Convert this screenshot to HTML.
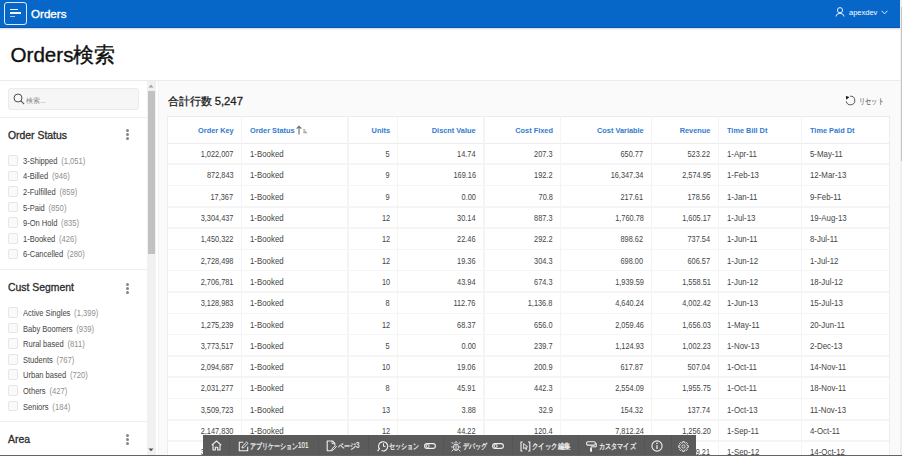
<!DOCTYPE html>
<html><head><meta charset="utf-8"><style>
*{box-sizing:border-box}
html,body{margin:0;padding:0}
body{width:902px;height:456px;overflow:hidden;position:relative;background:#fff;font-family:"Liberation Sans",sans-serif;color:#262626}
.a{position:absolute;white-space:nowrap}
.hdr{left:0;top:0;width:900px;height:27.8px;background:#0667c8;border-bottom:1px solid #0a58ad;box-shadow:0 1px 1.5px rgba(0,40,90,0.18)}
.vsb{left:900px;top:0;width:2px;height:456px;background:#f0f0f0}
.vsbt{left:901px;top:7px;width:1px;height:154px;background:#c4c4c4}
.ttl{left:10.5px;top:41.3px;font-size:20.6px;color:#111;-webkit-text-stroke:0.35px #111}
.bl{left:0;top:80px;width:900px;height:1px;background:#ebebeb}
.lp{left:0;top:81px;width:146.6px;height:375px;background:#fff}
.sbtr{left:146.6px;top:81px;width:9px;height:375px;background:#f1f1f1}
.sbth{left:147.5px;top:90.5px;width:7.5px;height:163.5px;background:#c1c1c1}
.cnt{left:155.6px;top:81px;width:744.4px;height:375px;background:#fafafa}
.tbl{left:167px;top:116px;width:722.5px;height:340px;background:#fff;border-left:1px solid #ececec;border-right:1px solid #ececec;border-top:1px solid #ececec}
.hl{height:1px;background:#ececec}
.vl{width:1px;background:#f0f0f0}
.th{font-size:8px;font-weight:700;color:#2f7bd0;transform:scaleX(0.92)}
.r{transform-origin:100% 0}.l{transform-origin:0 0}
.td.l{transform:scaleX(0.96)}
.td{font-size:8.2px;color:#454545;transform:scaleX(0.9)}
.ft{font-size:10.4px;font-weight:400;color:#2b2b2b;-webkit-text-stroke:0.3px #2b2b2b}
.cb{width:10.6px;height:10.8px;border:1px solid #e6e6e6;border-radius:2px;background:#fafafa}
.fl{font-size:8.4px;color:#444;transform:scaleX(0.9);transform-origin:0 0}
.fc{font-size:8.5px;color:#8f8f8f}
.sep{height:1px;background:#efefef}
.keb{width:3.2px;height:3.2px;border-radius:50%;background:#858585}
.tb{left:203.3px;top:435px;width:493.1px;height:21px;background:#5b5b5b}
.tbs{top:435px;width:1px;height:20px;background:#555}
.tbt{font-size:8px;color:#f4f4f4;font-weight:400;-webkit-text-stroke:0.25px #f4f4f4}
</style></head><body>

<div class="a hdr"></div>
<div class="a" style="left:4px;top:2px;width:23px;height:22.5px;border:1.5px solid #dfeaf7;border-radius:3px"></div>
<div class="a" style="left:10.3px;top:9.2px;width:7.8px;height:1.3px;background:#f4f8fc"></div>
<div class="a" style="left:10.3px;top:12.4px;width:10.8px;height:1.4px;background:#f4f8fc"></div>
<div class="a" style="left:10.3px;top:15.5px;width:5px;height:1.3px;background:#a9c8ec"></div>
<div class="a" style="left:31px;top:7.2px;font-size:11.6px;font-weight:400;color:#fff;-webkit-text-stroke:0.35px #fff">Orders</div>
<svg class="a" style="left:835px;top:7px" width="10" height="10" viewBox="0 0 10 10"><circle cx="5" cy="3.2" r="2.6" fill="none" stroke="#e8f0fb" stroke-width="1"/><path d="M0.8 9.5 Q1.5 6.3 5 6.3 Q8.5 6.3 9.2 9.5" fill="none" stroke="#e8f0fb" stroke-width="1"/></svg>
<div class="a" style="left:849px;top:8.2px;font-size:7.5px;color:#fff">apexdev</div>
<svg class="a" style="left:881px;top:10px" width="7" height="5" viewBox="0 0 7 5"><path d="M0.6 0.8 L3.5 3.8 L6.4 0.8" fill="none" stroke="#e8f0fb" stroke-width="1"/></svg>
<div class="a vsb"></div><div class="a vsbt"></div>
<div class="a ttl">Orders検索</div>
<div class="a bl"></div>
<div class="a lp"></div><div class="a sbtr"></div><div class="a sbth"></div><div class="a cnt"></div><div class="a" style="left:155.6px;top:81px;width:2.7px;height:375px;background:#fff"></div><div class="a" style="left:158.3px;top:81px;width:0.6px;height:375px;background:#f3f3f3"></div>
<svg class="a" style="left:148px;top:84px" width="6" height="4" viewBox="0 0 6 4"><path d="M0.5 3.5 L3 0.8 L5.5 3.5Z" fill="#a0a0a0"/></svg>
<svg class="a" style="left:148px;top:447.5px" width="6" height="4" viewBox="0 0 6 4"><path d="M0.5 0.5 L3 3.2 L5.5 0.5Z" fill="#505050"/></svg>
<div class="a" style="left:8px;top:88.2px;width:130.8px;height:21.5px;background:#f6f6f6;border:1px solid #ebebeb;border-radius:3px"></div>
<svg class="a" style="left:12.5px;top:93.3px" width="12" height="12" viewBox="0 0 12 12"><circle cx="5" cy="5" r="4" fill="none" stroke="#505050" stroke-width="1"/><path d="M7.9 7.9 L11.2 11.2" stroke="#505050" stroke-width="1.1"/></svg>
<div class="a" style="left:26.3px;top:95.8px;font-size:6.8px;color:#8f8f8f">検索...</div>
<div class="a sep" style="left:0;top:116.5px;width:146.6px"></div>
<div class="a ft" style="left:8px;top:129.8px">Order Status</div>
<div class="a keb" style="left:125.9px;top:128.60px"></div>
<div class="a keb" style="left:125.9px;top:132.70px"></div>
<div class="a keb" style="left:125.9px;top:136.80px"></div>
<div class="a cb" style="left:7.7px;top:154.90px"></div>
<div class="a fl" style="left:22.5px;top:155.80px">3-Shipped<span class="fc" style="margin-left:4.2px">(1,051)</span></div>
<div class="a cb" style="left:7.7px;top:170.50px"></div>
<div class="a fl" style="left:22.5px;top:171.40px">4-Billed<span class="fc" style="margin-left:4.2px">(946)</span></div>
<div class="a cb" style="left:7.7px;top:186.10px"></div>
<div class="a fl" style="left:22.5px;top:187.00px">2-Fulfilled<span class="fc" style="margin-left:4.2px">(859)</span></div>
<div class="a cb" style="left:7.7px;top:201.70px"></div>
<div class="a fl" style="left:22.5px;top:202.60px">5-Paid<span class="fc" style="margin-left:4.2px">(850)</span></div>
<div class="a cb" style="left:7.7px;top:217.30px"></div>
<div class="a fl" style="left:22.5px;top:218.20px">9-On Hold<span class="fc" style="margin-left:4.2px">(835)</span></div>
<div class="a cb" style="left:7.7px;top:232.90px"></div>
<div class="a fl" style="left:22.5px;top:233.80px">1-Booked<span class="fc" style="margin-left:4.2px">(426)</span></div>
<div class="a cb" style="left:7.7px;top:248.50px"></div>
<div class="a fl" style="left:22.5px;top:249.40px">6-Cancelled<span class="fc" style="margin-left:4.2px">(280)</span></div>
<div class="a sep" style="left:0;top:269px;width:146.6px"></div>
<div class="a ft" style="left:8px;top:281.8px">Cust Segment</div>
<div class="a keb" style="left:125.9px;top:282.50px"></div>
<div class="a keb" style="left:125.9px;top:286.60px"></div>
<div class="a keb" style="left:125.9px;top:290.70px"></div>
<div class="a cb" style="left:7.7px;top:307.00px"></div>
<div class="a fl" style="left:22.5px;top:307.90px">Active Singles<span class="fc" style="margin-left:4.2px">(1,399)</span></div>
<div class="a cb" style="left:7.7px;top:322.60px"></div>
<div class="a fl" style="left:22.5px;top:323.50px">Baby Boomers<span class="fc" style="margin-left:4.2px">(939)</span></div>
<div class="a cb" style="left:7.7px;top:338.20px"></div>
<div class="a fl" style="left:22.5px;top:339.10px">Rural based<span class="fc" style="margin-left:4.2px">(811)</span></div>
<div class="a cb" style="left:7.7px;top:353.80px"></div>
<div class="a fl" style="left:22.5px;top:354.70px">Students<span class="fc" style="margin-left:4.2px">(767)</span></div>
<div class="a cb" style="left:7.7px;top:369.40px"></div>
<div class="a fl" style="left:22.5px;top:370.30px">Urban based<span class="fc" style="margin-left:4.2px">(720)</span></div>
<div class="a cb" style="left:7.7px;top:385.00px"></div>
<div class="a fl" style="left:22.5px;top:385.90px">Others<span class="fc" style="margin-left:4.2px">(427)</span></div>
<div class="a cb" style="left:7.7px;top:400.60px"></div>
<div class="a fl" style="left:22.5px;top:401.50px">Seniors<span class="fc" style="margin-left:4.2px">(184)</span></div>
<div class="a sep" style="left:0;top:421px;width:146.6px"></div>
<div class="a ft" style="left:8px;top:433.6px">Area</div>
<div class="a keb" style="left:125.9px;top:434.00px"></div>
<div class="a keb" style="left:125.9px;top:438.10px"></div>
<div class="a keb" style="left:125.9px;top:442.20px"></div>
<div class="a" style="left:167.5px;top:93.8px;font-size:11.3px;font-weight:400;color:#1f1f1f;-webkit-text-stroke:0.3px #1f1f1f">合計行数 5,247</div>
<svg class="a" style="left:845px;top:95px" width="11" height="11" viewBox="0 0 11 11"><path d="M5.1 1.2 A4.3 4.3 0 1 1 1.27 6.25" fill="none" stroke="#5a5a5a" stroke-width="1"/><path d="M0.9 0.9 L4.4 1.9 L1.3 4.7Z" fill="#111"/></svg>
<div class="a" style="left:859px;top:96.2px;font-size:8px;color:#333;transform:scaleX(0.775);transform-origin:0 0">リセット</div>
<div class="a" style="left:167px;top:116px;width:723px;height:340px;background:#fff"></div>
<div class="a" style="left:167px;top:115.85px;width:723px;height:1.5px;background:#ebebeb"></div>
<div class="a" style="left:167px;top:142.75px;width:723px;height:1.5px;background:#ececec"></div>
<div class="a" style="left:167px;top:163.40px;width:723px;height:1.5px;background:#f5f5f5"></div>
<div class="a" style="left:167px;top:184.70px;width:723px;height:1.5px;background:#f5f5f5"></div>
<div class="a" style="left:167px;top:206.00px;width:723px;height:1.5px;background:#f5f5f5"></div>
<div class="a" style="left:167px;top:227.30px;width:723px;height:1.5px;background:#f5f5f5"></div>
<div class="a" style="left:167px;top:248.60px;width:723px;height:1.5px;background:#f5f5f5"></div>
<div class="a" style="left:167px;top:269.90px;width:723px;height:1.5px;background:#f5f5f5"></div>
<div class="a" style="left:167px;top:291.20px;width:723px;height:1.5px;background:#f5f5f5"></div>
<div class="a" style="left:167px;top:312.50px;width:723px;height:1.5px;background:#f5f5f5"></div>
<div class="a" style="left:167px;top:333.80px;width:723px;height:1.5px;background:#f5f5f5"></div>
<div class="a" style="left:167px;top:355.10px;width:723px;height:1.5px;background:#f5f5f5"></div>
<div class="a" style="left:167px;top:376.40px;width:723px;height:1.5px;background:#f5f5f5"></div>
<div class="a" style="left:167px;top:397.70px;width:723px;height:1.5px;background:#f5f5f5"></div>
<div class="a" style="left:167px;top:419.00px;width:723px;height:1.5px;background:#f5f5f5"></div>
<div class="a" style="left:167px;top:440.30px;width:723px;height:1.5px;background:#f5f5f5"></div>
<div class="a" style="left:166.75px;top:116px;width:1.5px;height:340px;background:#ededed"></div>
<div class="a" style="left:240.55px;top:116px;width:1.5px;height:340px;background:#f4f4f4"></div>
<div class="a" style="left:347.45px;top:116px;width:1.5px;height:340px;background:#f4f4f4"></div>
<div class="a" style="left:396.85px;top:116px;width:1.5px;height:340px;background:#f4f4f4"></div>
<div class="a" style="left:483.05px;top:116px;width:1.5px;height:340px;background:#f4f4f4"></div>
<div class="a" style="left:559.95px;top:116px;width:1.5px;height:340px;background:#f4f4f4"></div>
<div class="a" style="left:650.75px;top:116px;width:1.5px;height:340px;background:#f4f4f4"></div>
<div class="a" style="left:717.65px;top:116px;width:1.5px;height:340px;background:#f4f4f4"></div>
<div class="a" style="left:800.65px;top:116px;width:1.5px;height:340px;background:#f4f4f4"></div>
<div class="a" style="left:888.55px;top:116px;width:1.5px;height:340px;background:#ededed"></div>
<div class="a th r" style="right:668.7px;top:126.1px">Order Key</div>
<div class="a th l" style="left:249.6px;top:126.1px">Order Status</div>
<div class="a th r" style="right:512.4px;top:126.1px">Units</div>
<div class="a th r" style="right:426.2px;top:126.1px">Discnt Value</div>
<div class="a th r" style="right:349.3px;top:126.1px">Cost Fixed</div>
<div class="a th r" style="right:258.5px;top:126.1px">Cost Variable</div>
<div class="a th r" style="right:191.6px;top:126.1px">Revenue</div>
<div class="a th l" style="left:726.7px;top:126.1px">Time Bill Dt</div>
<div class="a th l" style="left:809.7px;top:126.1px">Time Paid Dt</div>
<svg class="a" style="left:295.5px;top:124.5px" width="12" height="10" viewBox="0 0 12 10"><path d="M3 9.5 V1.5 M0.7 3.7 L3 1.2 L5.3 3.7" fill="none" stroke="#6a6a6a" stroke-width="1.1"/><path d="M7.3 4.6 h1.6 M7.3 6.2 h2.8 M7.3 7.8 h3.8" stroke="#888" stroke-width="0.9"/></svg>
<div class="a td r" style="right:668.7px;top:150.15px">1,022,007</div>
<div class="a td l" style="left:249.6px;top:150.15px">1-Booked</div>
<div class="a td r" style="right:512.4px;top:150.15px">5</div>
<div class="a td r" style="right:426.2px;top:150.15px">14.74</div>
<div class="a td r" style="right:349.3px;top:150.15px">207.3</div>
<div class="a td r" style="right:258.5px;top:150.15px">650.77</div>
<div class="a td r" style="right:191.6px;top:150.15px">523.22</div>
<div class="a td l" style="left:726.7px;top:150.15px">1-Apr-11</div>
<div class="a td l" style="left:809.7px;top:150.15px">5-May-11</div>
<div class="a td r" style="right:668.7px;top:171.45px">872,843</div>
<div class="a td l" style="left:249.6px;top:171.45px">1-Booked</div>
<div class="a td r" style="right:512.4px;top:171.45px">9</div>
<div class="a td r" style="right:426.2px;top:171.45px">169.16</div>
<div class="a td r" style="right:349.3px;top:171.45px">192.2</div>
<div class="a td r" style="right:258.5px;top:171.45px">16,347.34</div>
<div class="a td r" style="right:191.6px;top:171.45px">2,574.95</div>
<div class="a td l" style="left:726.7px;top:171.45px">1-Feb-13</div>
<div class="a td l" style="left:809.7px;top:171.45px">12-Mar-13</div>
<div class="a td r" style="right:668.7px;top:192.75px">17,367</div>
<div class="a td l" style="left:249.6px;top:192.75px">1-Booked</div>
<div class="a td r" style="right:512.4px;top:192.75px">9</div>
<div class="a td r" style="right:426.2px;top:192.75px">0.00</div>
<div class="a td r" style="right:349.3px;top:192.75px">70.8</div>
<div class="a td r" style="right:258.5px;top:192.75px">217.61</div>
<div class="a td r" style="right:191.6px;top:192.75px">178.56</div>
<div class="a td l" style="left:726.7px;top:192.75px">1-Jan-11</div>
<div class="a td l" style="left:809.7px;top:192.75px">9-Feb-11</div>
<div class="a td r" style="right:668.7px;top:214.05px">3,304,437</div>
<div class="a td l" style="left:249.6px;top:214.05px">1-Booked</div>
<div class="a td r" style="right:512.4px;top:214.05px">12</div>
<div class="a td r" style="right:426.2px;top:214.05px">30.14</div>
<div class="a td r" style="right:349.3px;top:214.05px">887.3</div>
<div class="a td r" style="right:258.5px;top:214.05px">1,760.78</div>
<div class="a td r" style="right:191.6px;top:214.05px">1,605.17</div>
<div class="a td l" style="left:726.7px;top:214.05px">1-Jul-13</div>
<div class="a td l" style="left:809.7px;top:214.05px">19-Aug-13</div>
<div class="a td r" style="right:668.7px;top:235.35px">1,450,322</div>
<div class="a td l" style="left:249.6px;top:235.35px">1-Booked</div>
<div class="a td r" style="right:512.4px;top:235.35px">12</div>
<div class="a td r" style="right:426.2px;top:235.35px">22.46</div>
<div class="a td r" style="right:349.3px;top:235.35px">292.2</div>
<div class="a td r" style="right:258.5px;top:235.35px">898.62</div>
<div class="a td r" style="right:191.6px;top:235.35px">737.54</div>
<div class="a td l" style="left:726.7px;top:235.35px">1-Jun-11</div>
<div class="a td l" style="left:809.7px;top:235.35px">8-Jul-11</div>
<div class="a td r" style="right:668.7px;top:256.65px">2,728,498</div>
<div class="a td l" style="left:249.6px;top:256.65px">1-Booked</div>
<div class="a td r" style="right:512.4px;top:256.65px">12</div>
<div class="a td r" style="right:426.2px;top:256.65px">19.36</div>
<div class="a td r" style="right:349.3px;top:256.65px">304.3</div>
<div class="a td r" style="right:258.5px;top:256.65px">698.00</div>
<div class="a td r" style="right:191.6px;top:256.65px">606.57</div>
<div class="a td l" style="left:726.7px;top:256.65px">1-Jun-12</div>
<div class="a td l" style="left:809.7px;top:256.65px">1-Jul-12</div>
<div class="a td r" style="right:668.7px;top:277.95px">2,706,781</div>
<div class="a td l" style="left:249.6px;top:277.95px">1-Booked</div>
<div class="a td r" style="right:512.4px;top:277.95px">10</div>
<div class="a td r" style="right:426.2px;top:277.95px">43.94</div>
<div class="a td r" style="right:349.3px;top:277.95px">674.3</div>
<div class="a td r" style="right:258.5px;top:277.95px">1,939.59</div>
<div class="a td r" style="right:191.6px;top:277.95px">1,558.51</div>
<div class="a td l" style="left:726.7px;top:277.95px">1-Jun-12</div>
<div class="a td l" style="left:809.7px;top:277.95px">18-Jul-12</div>
<div class="a td r" style="right:668.7px;top:299.25px">3,128,983</div>
<div class="a td l" style="left:249.6px;top:299.25px">1-Booked</div>
<div class="a td r" style="right:512.4px;top:299.25px">8</div>
<div class="a td r" style="right:426.2px;top:299.25px">112.76</div>
<div class="a td r" style="right:349.3px;top:299.25px">1,136.8</div>
<div class="a td r" style="right:258.5px;top:299.25px">4,640.24</div>
<div class="a td r" style="right:191.6px;top:299.25px">4,002.42</div>
<div class="a td l" style="left:726.7px;top:299.25px">1-Jun-13</div>
<div class="a td l" style="left:809.7px;top:299.25px">15-Jul-13</div>
<div class="a td r" style="right:668.7px;top:320.55px">1,275,239</div>
<div class="a td l" style="left:249.6px;top:320.55px">1-Booked</div>
<div class="a td r" style="right:512.4px;top:320.55px">12</div>
<div class="a td r" style="right:426.2px;top:320.55px">68.37</div>
<div class="a td r" style="right:349.3px;top:320.55px">656.0</div>
<div class="a td r" style="right:258.5px;top:320.55px">2,059.46</div>
<div class="a td r" style="right:191.6px;top:320.55px">1,656.03</div>
<div class="a td l" style="left:726.7px;top:320.55px">1-May-11</div>
<div class="a td l" style="left:809.7px;top:320.55px">20-Jun-11</div>
<div class="a td r" style="right:668.7px;top:341.85px">3,773,517</div>
<div class="a td l" style="left:249.6px;top:341.85px">1-Booked</div>
<div class="a td r" style="right:512.4px;top:341.85px">5</div>
<div class="a td r" style="right:426.2px;top:341.85px">0.00</div>
<div class="a td r" style="right:349.3px;top:341.85px">239.7</div>
<div class="a td r" style="right:258.5px;top:341.85px">1,124.93</div>
<div class="a td r" style="right:191.6px;top:341.85px">1,002.23</div>
<div class="a td l" style="left:726.7px;top:341.85px">1-Nov-13</div>
<div class="a td l" style="left:809.7px;top:341.85px">2-Dec-13</div>
<div class="a td r" style="right:668.7px;top:363.15px">2,094,687</div>
<div class="a td l" style="left:249.6px;top:363.15px">1-Booked</div>
<div class="a td r" style="right:512.4px;top:363.15px">10</div>
<div class="a td r" style="right:426.2px;top:363.15px">19.06</div>
<div class="a td r" style="right:349.3px;top:363.15px">200.9</div>
<div class="a td r" style="right:258.5px;top:363.15px">617.87</div>
<div class="a td r" style="right:191.6px;top:363.15px">507.04</div>
<div class="a td l" style="left:726.7px;top:363.15px">1-Oct-11</div>
<div class="a td l" style="left:809.7px;top:363.15px">14-Nov-11</div>
<div class="a td r" style="right:668.7px;top:384.45px">2,031,277</div>
<div class="a td l" style="left:249.6px;top:384.45px">1-Booked</div>
<div class="a td r" style="right:512.4px;top:384.45px">8</div>
<div class="a td r" style="right:426.2px;top:384.45px">45.91</div>
<div class="a td r" style="right:349.3px;top:384.45px">442.3</div>
<div class="a td r" style="right:258.5px;top:384.45px">2,554.09</div>
<div class="a td r" style="right:191.6px;top:384.45px">1,955.75</div>
<div class="a td l" style="left:726.7px;top:384.45px">1-Oct-11</div>
<div class="a td l" style="left:809.7px;top:384.45px">18-Nov-11</div>
<div class="a td r" style="right:668.7px;top:405.75px">3,509,723</div>
<div class="a td l" style="left:249.6px;top:405.75px">1-Booked</div>
<div class="a td r" style="right:512.4px;top:405.75px">13</div>
<div class="a td r" style="right:426.2px;top:405.75px">3.88</div>
<div class="a td r" style="right:349.3px;top:405.75px">32.9</div>
<div class="a td r" style="right:258.5px;top:405.75px">154.32</div>
<div class="a td r" style="right:191.6px;top:405.75px">137.74</div>
<div class="a td l" style="left:726.7px;top:405.75px">1-Oct-13</div>
<div class="a td l" style="left:809.7px;top:405.75px">11-Nov-13</div>
<div class="a td r" style="right:668.7px;top:427.05px">2,147,830</div>
<div class="a td l" style="left:249.6px;top:427.05px">1-Booked</div>
<div class="a td r" style="right:512.4px;top:427.05px">12</div>
<div class="a td r" style="right:426.2px;top:427.05px">44.22</div>
<div class="a td r" style="right:349.3px;top:427.05px">120.4</div>
<div class="a td r" style="right:258.5px;top:427.05px">7,812.24</div>
<div class="a td r" style="right:191.6px;top:427.05px">1,256.20</div>
<div class="a td l" style="left:726.7px;top:427.05px">1-Sep-11</div>
<div class="a td l" style="left:809.7px;top:427.05px">4-Oct-11</div>
<div class="a td r" style="right:668.7px;top:448.35px">3,017,925</div>
<div class="a td l" style="left:249.6px;top:448.35px">1-Booked</div>
<div class="a td r" style="right:512.4px;top:448.35px">12</div>
<div class="a td r" style="right:426.2px;top:448.35px">28.03</div>
<div class="a td r" style="right:349.3px;top:448.35px">262.2</div>
<div class="a td r" style="right:258.5px;top:448.35px">1,238.87</div>
<div class="a td r" style="right:191.6px;top:448.35px">979.21</div>
<div class="a td l" style="left:726.7px;top:448.35px">1-Sep-12</div>
<div class="a td l" style="left:809.7px;top:448.35px">14-Oct-12</div>
<div class="a tb"></div>
<div class="a tbs" style="left:229px"></div>
<div class="a tbs" style="left:317.5px"></div>
<div class="a tbs" style="left:368px"></div>
<div class="a tbs" style="left:443px"></div>
<div class="a tbs" style="left:512px"></div>
<div class="a tbs" style="left:578px"></div>
<div class="a tbs" style="left:644px"></div>
<div class="a tbs" style="left:670.5px"></div>
<svg class="a" style="left:211px;top:439.8px" width="11" height="11" viewBox="0 0 11 11"><path d="M0.8 5.2 L5.5 1 L10.2 5.2 M2 4.2 V10 H4.3 V7.2 H6.7 V10 H9 V4.2" fill="none" stroke="#f0f0f0" stroke-width="1.1" stroke-linejoin="round"/></svg>
<svg class="a" style="left:238px;top:440.5px" width="11" height="11" viewBox="0 0 11 11"><path d="M5.2 1.3 H1.3 V9.7 H9.7 V5.8" fill="none" stroke="#f0f0f0" stroke-width="1.1"/><path d="M4 7 L4.4 5.2 L8.6 1 L10 2.4 L5.8 6.6 Z" fill="none" stroke="#f0f0f0" stroke-width="1"/></svg>
<div class="a tbt" style="left:250.4px;top:440.6px;font-size:8px;transform:scaleX(0.749);transform-origin:0 0">アプリケーション</div>
<div class="a" style="left:298.3px;top:440.3px;font-size:8.6px;color:#f0f0f0;-webkit-text-stroke:0.2px #f0f0f0;transform:scaleX(0.72);transform-origin:0 0">101</div>
<svg class="a" style="left:326px;top:439.8px" width="11" height="12" viewBox="0 0 11 12"><path d="M5.5 10.8 H1.2 V1 H6.5 L8.8 3.3 V5.2" fill="none" stroke="#f0f0f0" stroke-width="1.1" stroke-linejoin="round"/><path d="M6 1.2 V3.6 H8.6" fill="none" stroke="#f0f0f0" stroke-width="0.8"/><path d="M5.6 10.6 L6 8.8 L9.3 5.6 L10.4 6.7 L7.2 10 Z" fill="none" stroke="#f0f0f0" stroke-width="1"/></svg>
<div class="a tbt" style="left:337.9px;top:440.6px;font-size:8px;transform:scaleX(0.760);transform-origin:0 0">ページ</div>
<div class="a" style="left:356.2px;top:440.3px;font-size:8.6px;color:#f0f0f0;-webkit-text-stroke:0.2px #f0f0f0;transform:scaleX(0.72);transform-origin:0 0">3</div>
<svg class="a" style="left:376.5px;top:440px" width="12" height="12" viewBox="0 0 12 12"><path d="M2.3 8.8 A4.6 4.6 0 1 1 4.5 10.6" fill="none" stroke="#f0f0f0" stroke-width="1.1"/><path d="M6.5 3.3 V6.4 H8.6" fill="none" stroke="#f0f0f0" stroke-width="1"/><path d="M0.6 11.2 L2.8 8.2" stroke="#f0f0f0" stroke-width="1.1"/></svg>
<div class="a tbt" style="left:389.2px;top:440.6px;font-size:8px;transform:scaleX(0.750);transform-origin:0 0">セッション</div>
<svg class="a" style="left:423.5px;top:443px" width="12" height="6" viewBox="0 0 12 6"><rect x="0.6" y="0.6" width="10.8" height="4.8" rx="2.4" fill="none" stroke="#f0f0f0" stroke-width="1.1"/><circle cx="3.6" cy="3" r="1.5" fill="none" stroke="#f0f0f0" stroke-width="1"/></svg>
<svg class="a" style="left:450.5px;top:440.5px" width="10" height="11" viewBox="0 0 10 11"><ellipse cx="5" cy="6.2" rx="2.4" ry="3.3" fill="none" stroke="#f0f0f0" stroke-width="1"/><path d="M0.6 1 L2.6 3.2 M9.4 1 L7.4 3.2 M0.2 6 H2.6 M9.8 6 H7.4 M0.6 10.4 L2.7 8.4 M9.4 10.4 L7.3 8.4 M3.4 1.8 L5 0.6 L6.6 1.8 M5 3 V9.4" fill="none" stroke="#f0f0f0" stroke-width="0.9"/></svg>
<div class="a tbt" style="left:462.5px;top:440.6px;font-size:8px;transform:scaleX(0.756);transform-origin:0 0">デバッグ</div>
<svg class="a" style="left:491.8px;top:443px" width="12" height="6" viewBox="0 0 12 6"><rect x="0.6" y="0.6" width="10.8" height="4.8" rx="2.4" fill="none" stroke="#f0f0f0" stroke-width="1.1"/><circle cx="3.6" cy="3" r="1.5" fill="none" stroke="#f0f0f0" stroke-width="1"/></svg>
<svg class="a" style="left:519.5px;top:440.5px" width="11" height="11" viewBox="0 0 11 11"><path d="M2.6 1 H1 V10 H2.6 M8 1 H9.8 V10 H8" fill="none" stroke="#f0f0f0" stroke-width="1.1"/><path d="M3.6 2.6 L7.6 5.8 L5.8 6.1 L6.8 8.2 L5.9 8.6 L4.9 6.6 L3.7 7.8 Z" fill="none" stroke="#f0f0f0" stroke-width="0.9"/></svg>
<div class="a tbt" style="left:531.7px;top:440.6px;font-size:8px;transform:scaleX(0.800);transform-origin:0 0">クイック編集</div>
<svg class="a" style="left:585.8px;top:440.5px" width="11" height="11" viewBox="0 0 11 11"><rect x="0.7" y="0.7" width="8.6" height="3.4" rx="1.2" fill="none" stroke="#f0f0f0" stroke-width="1.1"/><path d="M9.3 2.4 H10.3 V5.8 H5 V7" fill="none" stroke="#f0f0f0" stroke-width="1"/><rect x="4" y="7" width="2" height="3.8" rx="0.5" fill="#f0f0f0"/></svg>
<div class="a tbt" style="left:598.7px;top:440.6px;font-size:8px;transform:scaleX(0.764);transform-origin:0 0">カスタマイズ</div>
<svg class="a" style="left:650.5px;top:440.3px" width="12" height="12" viewBox="0 0 12 12"><circle cx="6" cy="6" r="5.1" fill="none" stroke="#f0f0f0" stroke-width="1.1"/><path d="M6 5.2 V9" stroke="#f0f0f0" stroke-width="1.3"/><circle cx="6" cy="3.4" r="0.8" fill="#f0f0f0"/></svg>
<svg class="a" style="left:677.8px;top:440.5px" width="11" height="11" viewBox="0 0 11 11"><path d="M9.08 4.55 L10.44 4.75 L10.44 6.25 L9.08 6.45 L8.70 7.36 L9.53 8.46 L8.46 9.53 L7.36 8.70 L6.45 9.08 L6.25 10.44 L4.75 10.44 L4.55 9.08 L3.64 8.70 L2.54 9.53 L1.47 8.46 L2.30 7.36 L1.92 6.45 L0.56 6.25 L0.56 4.75 L1.92 4.55 L2.30 3.64 L1.47 2.54 L2.54 1.47 L3.64 2.30 L4.55 1.92 L4.75 0.56 L6.25 0.56 L6.45 1.92 L7.36 2.30 L8.46 1.47 L9.53 2.54 L8.70 3.64Z" fill="none" stroke="#f0f0f0" stroke-width="0.9" stroke-linejoin="round"/><circle cx="5.5" cy="5.5" r="1.6" fill="none" stroke="#f0f0f0" stroke-width="0.9"/></svg>
<div class="a" style="left:0;top:454.8px;width:902px;height:1.2px;background:#646464"></div>
</body></html>
